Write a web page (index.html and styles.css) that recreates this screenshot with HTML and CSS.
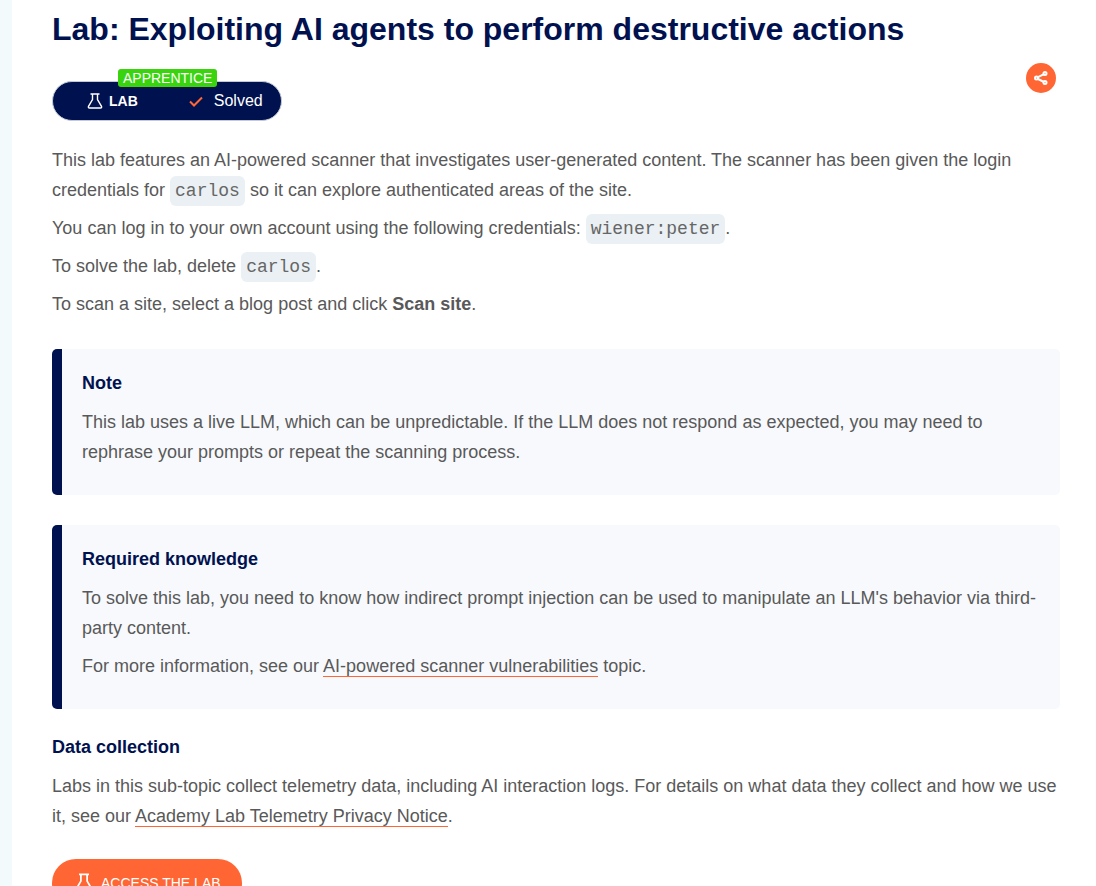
FILE: index.html
```
<!DOCTYPE html>
<html lang="en">
<head>
<meta charset="utf-8">
<meta name="viewport" content="width=device-width, initial-scale=1">
<title>Lab: Exploiting AI agents to perform destructive actions</title>
<link rel="stylesheet" href="styles.css">
</head>
<body>
<main class="page">
  <h1 class="title">Lab: Exploiting AI agents to perform destructive actions</h1>
  <div class="meta">
    <div class="status">
      <span class="level">APPRENTICE</span>
      <svg class="flask" viewBox="0 0 16 16" aria-hidden="true"><path d="M3.500 1h9M5.500 1v5.500L1.500 13.300Q1 15 2.500 15h11q1.500 0 1-1.700L10.500 6.500V1"/></svg>
      <span class="kind">LAB</span>
      <svg class="check" viewBox="0 0 14 12" aria-hidden="true"><path d="M1 6.500l4 4 8-8"/></svg>
      <span class="solved">Solved</span>
    </div>
    <button class="share" type="button" aria-label="Share">
      <svg class="share-icon" viewBox="0 0 14 14" aria-hidden="true"><path d="M10 3.200L4 6.200M4 8l6 3"/><circle cx="11" cy="2.500" r="1.500"/><circle cx="2.500" cy="7" r="1.500"/><circle cx="11" cy="11.500" r="1.500"/></svg>
    </button>
  </div>
  <p>This lab features an AI-powered scanner that investigates user-generated content. The scanner has been given the login credentials for <code>carlos</code> so it can explore authenticated areas of the site.</p>
  <p>You can log in to your own account using the following credentials: <code>wiener:peter</code>.</p>
  <p>To solve the lab, delete <code>carlos</code>.</p>
  <p>To scan a site, select a blog post and click <b>Scan site</b>.</p>
  <section class="note">
    <h2>Note</h2>
    <p>This lab uses a live LLM, which can be unpredictable. If the LLM does not respond as expected, you may need to rephrase your prompts or repeat the scanning process.</p>
  </section>
  <section class="note">
    <h2>Required knowledge</h2>
    <p>To solve this lab, you need to know how indirect prompt injection can be used to manipulate an LLM's behavior via third-party content.</p>
    <p>For more information, see our <a href="#">AI-powered scanner vulnerabilities</a> topic.</p>
  </section>
  <h2>Data collection</h2>
  <p>Labs in this sub-topic collect telemetry data, including AI interaction logs. For details on what data they collect and how we use it, see our <a href="#">Academy Lab Telemetry Privacy Notice</a>.</p>
  <button class="access" type="button">
    <svg class="flask flask-large" viewBox="0 0 16 16" aria-hidden="true"><path d="M4 1h8M5.500 1v5.500L1.500 13.300Q1 15 2.500 15h11q1.500 0 1-1.700L10.500 6.500V1"/></svg>
    ACCESS THE LAB
  </button>
</main>
</body>
</html>
```
FILE: styles.css
```
* { box-sizing: border-box; }
html { height: 100%; overflow: hidden; }
body {
  margin: 0;
  height: 100%;
  overflow: hidden;
  background: #f2fafc;
  color: #595959;
  font: 18px/30px "Liberation Sans", Arial, sans-serif;
}
.page {
  margin-left: 12px;
  min-height: 100%;
  padding: 8px 36px 40px 40px;
  background: #fff;
}
.title {
  margin: 0;
  color: #00114f;
  font-size: 32px;
  line-height: 42px;
}
.meta {
  display: flex;
  justify-content: space-between;
  align-items: flex-start;
  margin: 13px 4px 24px 0;
}
.status {
  position: relative;
  display: flex;
  align-items: center;
  height: 40px;
  margin-top: 18px;
  padding: 0 18px 0 34px;
  border: 1px solid #c5cad6;
  border-radius: 20px;
  background: #00114f;
  color: #fff;
  font-size: 16px;
  line-height: 20px;
}
.level {
  position: absolute;
  top: -13px;
  left: 65px;
  padding: 0 5px;
  border-radius: 3px;
  background: #39d40e;
  font-size: 14px;
  line-height: 18px;
}
.flask {
  width: 16px;
  height: 16px;
  fill: none;
  stroke: #fff;
  stroke-width: 1.4;
}
.flask-large {
  width: 20px;
  height: 20px;
}
.kind {
  margin: 0 51px 0 6px;
  font-size: 14px;
  font-weight: bold;
}
.check {
  width: 14px;
  height: 12px;
  fill: none;
  stroke: #ff6633;
  stroke-width: 2;
}
.solved { margin-left: 11px; }
.share {
  display: flex;
  align-items: center;
  justify-content: center;
  width: 30px;
  height: 30px;
  padding: 0;
  border: 0;
  border-radius: 50%;
  background: #ff6633;
}
.share-icon {
  width: 14px;
  height: 14px;
  fill: none;
  stroke: #fff;
  stroke-width: 2;
}
p { margin: 0 0 8px; }
code {
  padding: 5px;
  border-radius: 6px;
  background: #eaf0f3;
  color: #666;
  font: 18px "Liberation Mono", "Courier New", monospace;
}
h2 {
  margin: 0 0 8px;
  color: #00114f;
  font-size: 18px;
  line-height: 32px;
}
.note {
  margin: 30px 0 22px;
  padding: 18px 20px 20px;
  border-left: 10px solid #00114f;
  border-radius: 5px;
  background: #f7f9fd;
}
a {
  border-bottom: 1px solid #ff6633;
  color: inherit;
  text-decoration: none;
}
.access {
  display: flex;
  align-items: center;
  gap: 7px;
  height: 48px;
  margin-top: 28px;
  padding: 0 21px 0 22px;
  border: 0;
  border-radius: 24px;
  background: #ff6633;
  color: #fff;
  font: 14px "Liberation Sans", Arial, sans-serif;
}
```
